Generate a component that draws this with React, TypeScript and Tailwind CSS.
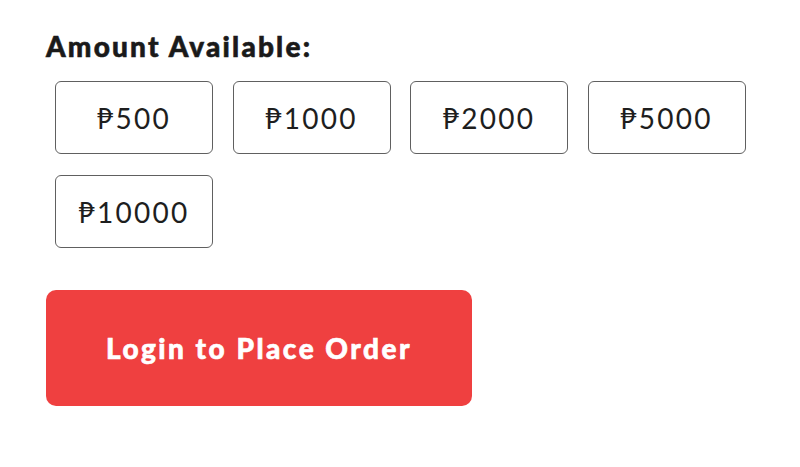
const amounts = [500, 1000, 2000, 5000, 10000]

export default function App() {
  return (
    <div
      className="min-h-screen bg-white px-[46px] pt-[28px]"
      style={{ fontFamily: "Lato, 'Noto Sans', 'DejaVu Sans', sans-serif" }}
    >
      <h2 className="text-[28px] font-black leading-[36px] tracking-[2.2px] text-[#1a1a1a] [-webkit-text-stroke:0.6px]">
        Amount Available:
      </h2>

      <div className="mt-[17px] flex w-[720px] flex-wrap gap-x-[19.5px] gap-y-[21px] pl-[9px]">
        {amounts.map(a => (
          <button
            key={a}
            className="flex h-[73px] w-[158px] items-center justify-center rounded-[6px] border border-[#606060] bg-white text-[28px] font-normal tracking-[2.3px] text-[#1e1e1e]"
          >
            ₱{a}
          </button>
        ))}
      </div>

      <button className="mt-[42px] flex h-[116px] w-[426px] items-center justify-center rounded-[10px] bg-[#ef4040] text-[28px] font-black tracking-[2.5px] text-white [-webkit-text-stroke:0.6px]">
        Login to Place Order
      </button>
    </div>
  )
}
